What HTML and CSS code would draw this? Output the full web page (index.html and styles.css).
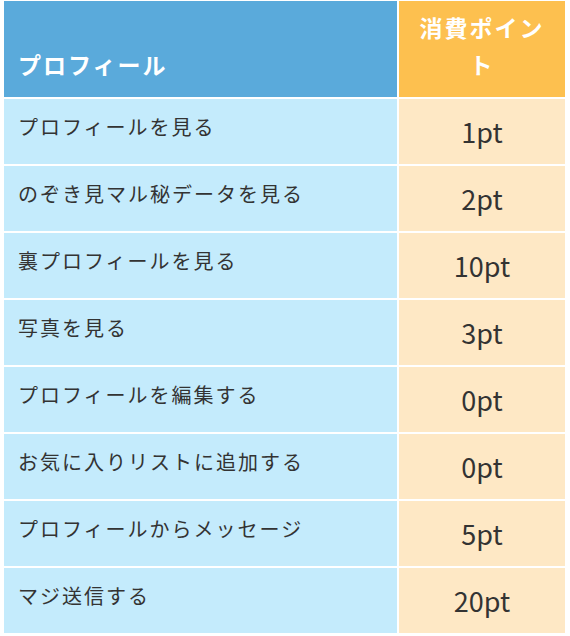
FILE: index.html
```html
<!DOCTYPE html>
<html lang="ja">
<head>
<meta charset="utf-8">
<title>消費ポイント</title>
<link rel="stylesheet" href="styles.css">
</head>
<body>
<table class="points">
  <thead>
    <tr>
      <th class="col-name">プロフィール</th>
      <th class="col-pt">消費ポイント</th>
    </tr>
  </thead>
  <tbody>
    <tr><td class="name">プロフィールを見る</td><td class="pt">1pt</td></tr>
    <tr><td class="name">のぞき見マル秘データを見る</td><td class="pt">2pt</td></tr>
    <tr><td class="name">裏プロフィールを見る</td><td class="pt">10pt</td></tr>
    <tr><td class="name">写真を見る</td><td class="pt">3pt</td></tr>
    <tr><td class="name">プロフィールを編集する</td><td class="pt">0pt</td></tr>
    <tr><td class="name">お気に入りリストに追加する</td><td class="pt">0pt</td></tr>
    <tr><td class="name">プロフィールからメッセージ</td><td class="pt">5pt</td></tr>
    <tr><td class="name">マジ送信する</td><td class="pt">20pt</td></tr>
  </tbody>
</table>
</body>
</html>
```
FILE: styles.css
```css
html, body {
  margin: 0;
  padding: 0;
  background: #ffffff;
}

body {
  font-family: "Noto Sans CJK JP", "Noto Sans", sans-serif;
  color: #333333;
}

.points {
  border-collapse: separate;
  border-spacing: 2px;
  margin: -1px 0 0 2px;
  width: 565px;
  table-layout: fixed;
}

.points th {
  color: #ffffff;
  font-weight: bold;
  font-size: 23px;
  letter-spacing: 2px;
  line-height: 37px;
  height: 95px;
  box-sizing: border-box;
  padding: 8px 14px 14px;
}

.col-name {
  background: #5aaadb;
  text-align: left;
  vertical-align: bottom;
  width: 393px;
}

.col-pt {
  background: #fdc04f;
  text-align: center;
  vertical-align: middle;
}

.points td {
  height: 65px;
  box-sizing: border-box;
  vertical-align: middle;
}

.name {
  background: #c4ebfc;
  font-size: 20px;
  letter-spacing: 2px;
  padding: 0 14px 10px;
  text-align: left;
}

.pt {
  background: #fee8c5;
  font-size: 27px;
  text-align: center;
  padding: 0;
}
```
